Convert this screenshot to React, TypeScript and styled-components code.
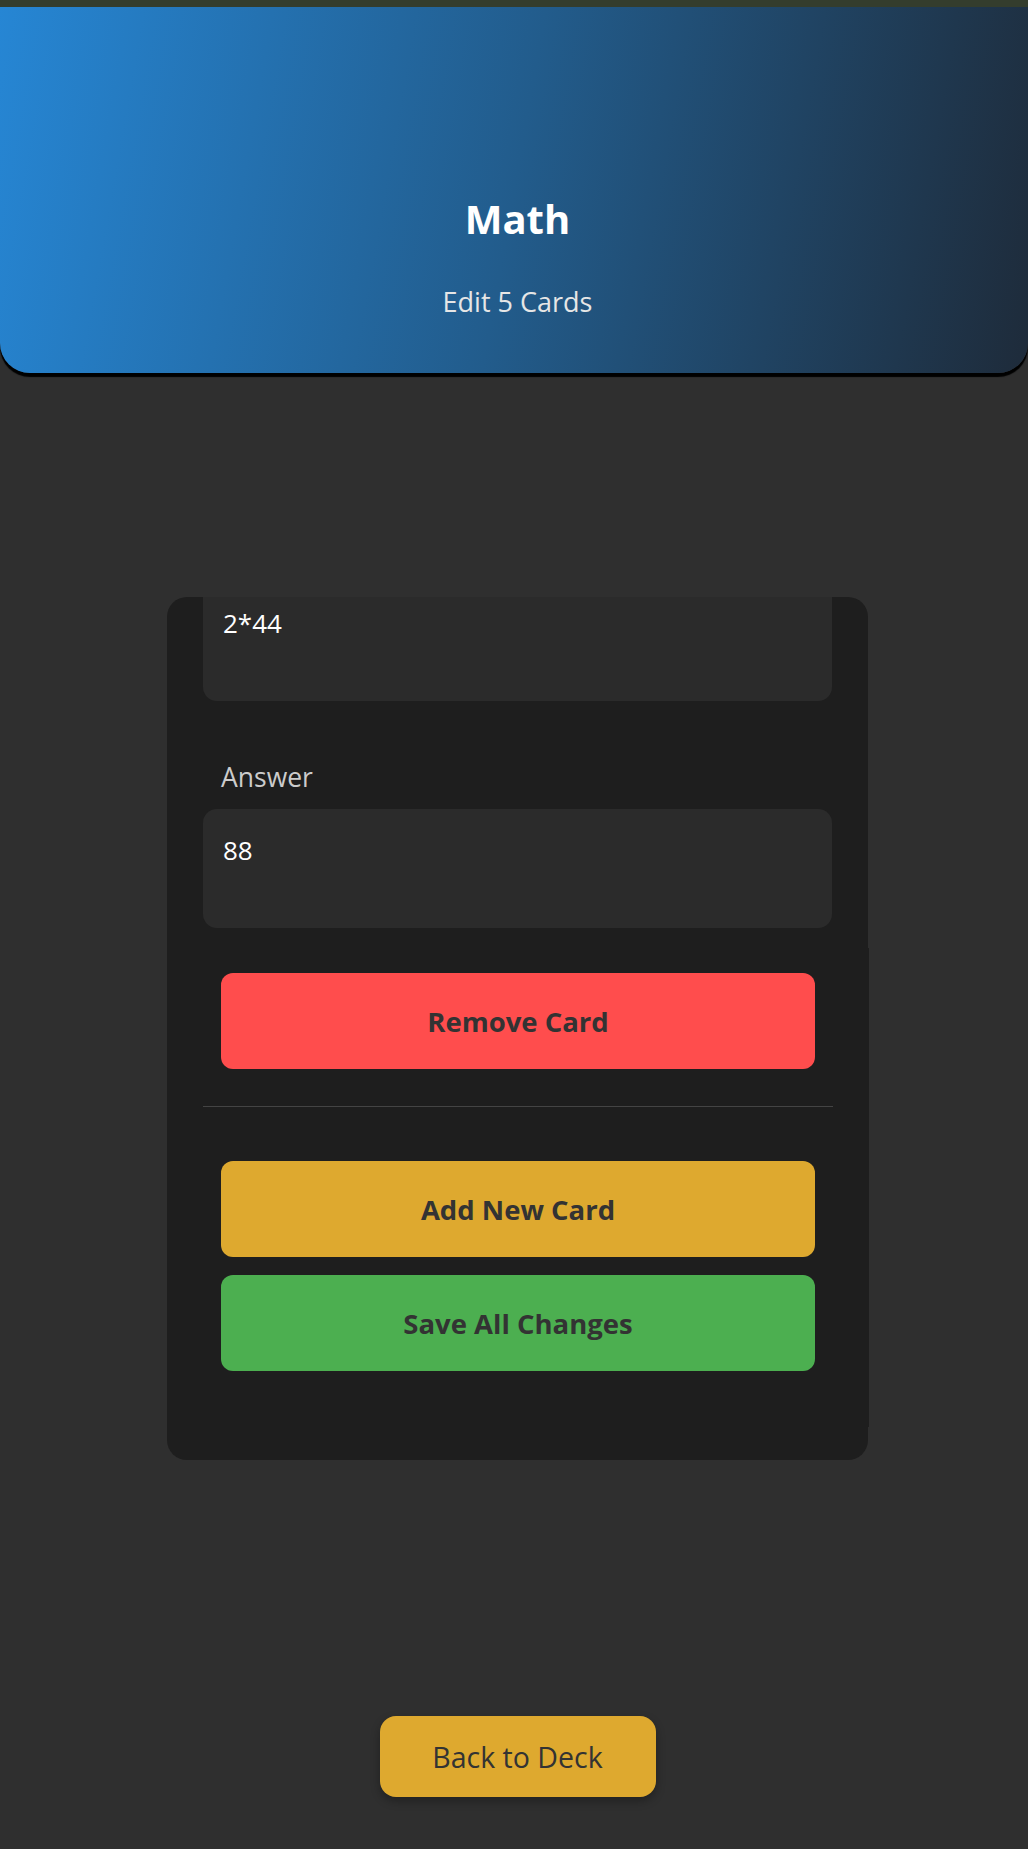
import React from "react";
import styled, { createGlobalStyle } from "styled-components";

const Global = createGlobalStyle`
  html, body {
    margin: 0;
    padding: 0;
    background: #2f2f2f;
    font-family: "Open Sans", "Noto Sans", sans-serif;
  }
  * { box-sizing: border-box; }
`;

const Page = styled.div`
  min-height: 1849px;
  background: #2f2f2f;
  display: flex;
  flex-direction: column;
`;

const TopStrip = styled.div`
  height: 7px;
  background: #343d2d;
`;

const Header = styled.header`
  height: 366px;
  border-radius: 0 0 30px 30px;
  background: linear-gradient(100deg, #2686d4 0%, #225c8c 50%, #1e2b3a 100%);
  box-shadow: 0 4px 1px #000;
  display: flex;
  flex-direction: column;
  align-items: center;
  justify-content: flex-end;
  padding: 0 0 54px 7px;
`;

const Title = styled.h1`
  margin: 0;
  font-size: 40px;
  font-weight: 700;
  color: #ffffff;
  line-height: 1.2;
`;

const Subtitle = styled.p`
  margin: 41px 0 0;
  font-size: 27px;
  color: #e6e6e6;
  line-height: 1.3;
`;

const Main = styled.main`
  display: flex;
  flex-direction: column;
  align-items: center;
  padding: 224px 0 0 7px;
`;

const Card = styled.section`
  width: 701px;
  background: #1e1e1e;
  border-radius: 20px;
  padding-bottom: 33px;
`;

const ScrollArea = styled.div`
  height: 351px;
  overflow: hidden;
  border-radius: 20px 20px 0 0;
  padding: 0 36px 20px;
  display: flex;
  flex-direction: column;
  justify-content: flex-end;
`;

const Field = styled.div<{ $gap?: number }>`
  display: flex;
  flex-direction: column;
  margin-top: ${(p) => p.$gap ?? 0}px;
`;

const Label = styled.label`
  font-size: 26.5px;
  color: #cccccc;
  padding-left: 18px;
  margin-bottom: 13px;
  line-height: 1.4;
`;

const TextBox = styled.textarea`
  height: 119px;
  width: 100%;
  background: #2b2b2b;
  border: none;
  border-radius: 14px;
  padding: 25px 20px 13px;
  color: #ffffff;
  font-family: "Open Sans", "Noto Sans", sans-serif;
  font-size: 26px;
  line-height: 1.3;
  resize: none;
  overflow: hidden;
  outline: none;
`;

const Actions = styled.div`
  width: calc(100% + 1px);
  background: #1e1e1e;
  padding: 25px 0 56px;
  display: flex;
  flex-direction: column;
`;

const ActionButton = styled.button<{ $color: string }>`
  margin: 0 54px;
  height: 96px;
  border: none;
  border-radius: 12px;
  background: ${(p) => p.$color};
  color: #333333;
  font-family: "Open Sans", "Noto Sans", sans-serif;
  font-size: 27.5px;
  font-weight: 700;
  cursor: pointer;
`;

const Divider = styled.hr`
  margin: 37px 36px 54px;
  border: none;
  border-top: 1px solid #444444;
  height: 0;
`;

const ButtonStack = styled.div`
  display: flex;
  flex-direction: column;
  gap: 18px;
`;

const BackButton = styled.button`
  margin-top: 256px;
  width: 276px;
  height: 81px;
  border: none;
  border-radius: 16px;
  background: #dea92f;
  color: #333333;
  font-family: "Open Sans", "Noto Sans", sans-serif;
  font-size: 28.5px;
  font-weight: 400;
  box-shadow: 0 4px 10px rgba(0, 0, 0, 0.3);
  cursor: pointer;
`;

export default function App() {
  return (
    <>
      <Global />
      <Page>
        <TopStrip />
        <Header>
          <Title>Math</Title>
          <Subtitle>Edit 5 Cards</Subtitle>
        </Header>
        <Main>
          <Card>
            <ScrollArea>
              <Field>
                <TextBox readOnly value="2*44" />
              </Field>
              <Field $gap={58}>
                <Label>Answer</Label>
                <TextBox readOnly value="88" />
              </Field>
            </ScrollArea>
            <Actions>
              <ActionButton $color="#ff4d4d">Remove Card</ActionButton>
              <Divider />
              <ButtonStack>
                <ActionButton $color="#dea92f">Add New Card</ActionButton>
                <ActionButton $color="#4caf50">Save All Changes</ActionButton>
              </ButtonStack>
            </Actions>
          </Card>
          <BackButton>Back to Deck</BackButton>
        </Main>
      </Page>
    </>
  );
}
